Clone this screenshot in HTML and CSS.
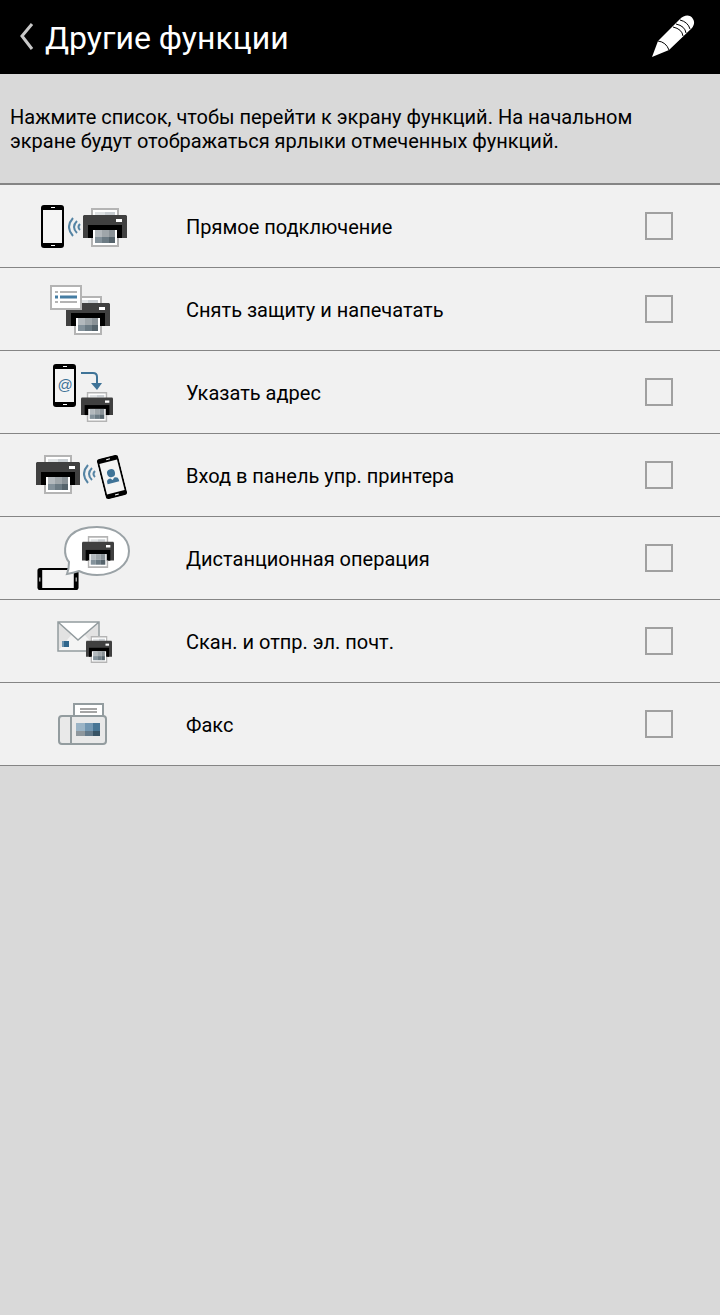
FILE: index.html
```
<!DOCTYPE html>
<html lang="ru">
  <head>
    <meta charset="utf-8">
    <meta name="viewport" content="width=device-width, initial-scale=1">
    <title>Другие функции</title>
    <link rel="stylesheet" href="styles.css">
  </head>
  <body>
    <!-- shared icon parts -->
    <svg class="symbols" width="0" height="0" aria-hidden="true">
      <symbol id="printer" viewBox="0 0 44 39" preserveAspectRatio="none">
        <path d="M9 8V1h26v7" fill="#fff" stroke="#b4b4b4" stroke-width="2"/>
        <path d="M12 4h10v3H12z" fill="#dfe2e4"/>
        <path d="M22 4h10v3H22z" fill="#c9ced2"/>
        <path d="M1 7h42l1 1v22H0V8z" fill="#404040"/>
        <path d="M5 17h34v13H5z" fill="#000"/>
        <path d="M33 11h6v3h-6z" fill="#fff"/>
        <path d="M10 22h24v16H10z" fill="#fff"/>
        <path d="M9 30v8h26v-8" fill="none" stroke="#b4b4b4" stroke-width="2"/>
        <path d="M12 22h7v7h-7z" fill="#b3b9bd"/>
        <path d="M19 22h7v7h-7z" fill="#9fa6aa"/>
        <path d="M26 22h6v7h-6z" fill="#8a9297"/>
        <path d="M12 29h7v6h-7z" fill="#84929b"/>
        <path d="M19 29h7v6h-7z" fill="#6c7b84"/>
        <path d="M26 29h6v6h-6z" fill="#56646c"/>
      </symbol>
      <symbol id="phone" viewBox="0 0 23 43">
        <rect width="23" height="43" rx="3" fill="#000"/>
        <path d="M2 5h19v33H2z" fill="#f4f4f4"/>
        <path d="M10 2h4v1h-4zM10 40h4v1h-4z" fill="#fff"/>
      </symbol>
      <symbol id="waves" viewBox="0 0 13 20">
        <path d="M5 1Q-3 10 5 19M9 4Q3 10 9 16M12 7Q9 10 12 13" fill="none" stroke="#5584a4" stroke-width="2"/>
      </symbol>
    </svg>

    <header class="header">
      <button class="iconButton backButton" type="button" aria-label="Назад">
        <svg width="16" height="28" viewBox="0 0 16 28"><path d="M14 1L4 13l10 13" fill="none" stroke="#c8c8c8" stroke-width="3"/></svg>
      </button>
      <h1 class="title">Другие функции</h1>
      <button class="iconButton" type="button" aria-label="Изменить">
        <svg width="44" height="44" viewBox="0 0 44 44">
          <path d="M1 42L7 26 29 4C33 0 39-1 42 4c2 3 1 6-1 9L18 35z" fill="#fff"/>
          <path d="M7 26q8 1 11 9M22 12q9 2 10 9M25 9q9 2 10 9M29 5q8 2 10 9" fill="none" stroke="#000" stroke-width="1"/>
        </svg>
      </button>
    </header>

    <main>
      <p class="hint">Нажмите список, чтобы перейти к экрану функций. На начальном экране будут отображаться ярлыки отмеченных функций.</p>
      <ul class="functionList">
        <li class="functionItem">
          <svg class="functionIcon" viewBox="0 0 110 82" aria-hidden="true">
            <use href="#phone" x="12" y="20" width="23" height="43"/>
            <use href="#waves" x="39" y="32" width="13" height="20"/>
            <use href="#printer" x="54" y="23" width="44" height="39"/>
          </svg>
          <label class="functionName" for="direct">Прямое подключение</label>
          <input class="check" type="checkbox" id="direct">
        </li>
        <li class="functionItem">
          <svg class="functionIcon" viewBox="0 0 110 82" aria-hidden="true">
            <use href="#printer" x="37" y="28" width="44" height="39"/>
            <path d="M22 18h30v23H22z" fill="#fff" stroke="#b4b4b4" stroke-width="2"/>
            <path d="M26 24h3M31 24h17M26 34h3M31 34h17" stroke="#b4b4b4" stroke-width="2"/>
            <path d="M26 29h3M31 29h17" stroke="#457da3" stroke-width="3"/>
          </svg>
          <label class="functionName" for="release">Снять защиту и напечатать</label>
          <input class="check" type="checkbox" id="release">
        </li>
        <li class="functionItem">
          <svg class="functionIcon" viewBox="0 0 110 82" aria-hidden="true">
            <use href="#phone" x="24" y="13" width="23" height="43"/>
            <text class="atSign" x="36" y="39" text-anchor="middle">@</text>
            <path d="M52 22h12q4 0 4 4v7" fill="none" stroke="#3f7397" stroke-width="2"/>
            <path d="M62 32h11l-5 7z" fill="#3f7397"/>
            <use href="#printer" x="52" y="41" width="32" height="30"/>
          </svg>
          <label class="functionName" for="address">Указать адрес</label>
          <input class="check" type="checkbox" id="address">
        </li>
        <li class="functionItem">
          <svg class="functionIcon" viewBox="0 0 110 82" aria-hidden="true">
            <use href="#printer" x="7" y="21" width="44" height="39"/>
            <use href="#waves" x="54" y="30" width="13" height="20"/>
            <g transform="rotate(-14 83 43)">
              <use href="#phone" x="72" y="22" width="22" height="42"/>
              <circle cx="83" cy="39" r="4" fill="#3f7397"/>
              <path d="M77 49v-2q0-3 4-3l2 2 2-2q4 0 4 3v2z" fill="#3f7397"/>
            </g>
          </svg>
          <label class="functionName" for="login">Вход в панель упр. принтера</label>
          <input class="check" type="checkbox" id="login">
        </li>
        <li class="functionItem">
          <svg class="functionIcon" viewBox="0 0 110 82" aria-hidden="true">
            <use href="#phone" width="22" height="42" transform="translate(50 51) rotate(90)"/>
            <path d="M40 45C34 38 35 25 42 18C48 12 58 10 68 10C86 10 100 20 100 34S86 58 68 58Q58 58 50 54Q44 56 38 57Q40 52 40 45z" fill="#fff" stroke="#9aa2a6" stroke-width="2"/>
            <use href="#printer" x="53" y="19" width="32" height="32"/>
          </svg>
          <label class="functionName" for="remote">Дистанционная операция</label>
          <input class="check" type="checkbox" id="remote">
        </li>
        <li class="functionItem">
          <svg class="functionIcon" viewBox="0 0 110 82" aria-hidden="true">
            <path d="M29 22h41v29H29z" fill="#e2e2e2"/>
            <path d="M29 51l14-17 6 5 6-5 15 17z" fill="#f4f4f4"/>
            <path d="M29 22h41L49 40z" fill="#fff"/>
            <path d="M29 22l20 18 21-18M29 22h41v29H29z" fill="none" stroke="#939c9f" stroke-width="1.5"/>
            <path d="M33 41h5v6h-5z" fill="#6b93af"/>
            <path d="M35 41h5v6h-5z" fill="#2f668c"/>
            <use href="#printer" x="57" y="36" width="26" height="27"/>
          </svg>
          <label class="functionName" for="scan">Скан. и отпр. эл. почт.</label>
          <input class="check" type="checkbox" id="scan">
        </li>
        <li class="functionItem">
          <svg class="functionIcon" viewBox="0 0 110 82" aria-hidden="true">
            <path d="M45 33V21h29v12" fill="#fff" stroke="#939c9f" stroke-width="2"/>
            <path d="M51 26h17M51 29h17" stroke="#888" stroke-width="1.5"/>
            <rect x="30" y="33" width="47" height="28" rx="3" fill="#e9e9e9" stroke="#939c9f" stroke-width="2"/>
            <path d="M42 33v28" stroke="#939c9f" stroke-width="2"/>
            <path d="M47 40h9v8h-9z" fill="#9bb4c6"/>
            <path d="M56 40h8v8h-8z" fill="#7397b2"/>
            <path d="M64 40h7v8h-7z" fill="#487594"/>
            <path d="M47 48h9v5h-9z" fill="#8e979d"/>
            <path d="M56 48h8v5h-8z" fill="#63798a"/>
            <path d="M64 48h7v5h-7z" fill="#385365"/>
          </svg>
          <label class="functionName" for="fax">Факс</label>
          <input class="check" type="checkbox" id="fax">
        </li>
      </ul>
    </main>
  </body>
</html>
```
FILE: styles.css
```
body{
  margin: 0;
  background-color: #d9d9d9;
  color: #000;
  font-family: Roboto, "Liberation Sans", sans-serif;
  font-size: 20px;
}
.symbols{
  position: absolute;
}
.header{
  display: flex;
  align-items: center;
  height: 74px;
  padding: 0 25px 0 18px;
  box-sizing: border-box;
  background-color: #000;
  color: #fff;
}
.iconButton{
  display: flex;
  padding: 0;
  border: 0;
  background: none;
  cursor: pointer;
}
.backButton{
  margin-right: 11px;
}
.title{
  flex: 1;
  margin: 0;
  padding-top: 2px;
  font-size: 32px;
  font-weight: 400;
  line-height: 40px;
}
.hint{
  margin: 0;
  padding: 31px 70px 30px 10px;
  line-height: 24px;
}
.functionList{
  margin: 0;
  padding: 0;
  list-style: none;
  border-top: 2px solid #858585;
}
.functionItem{
  display: flex;
  align-items: center;
  padding: 0 47px 0 29px;
  border-bottom: 1px solid #858585;
  background-color: #f1f1f1;
}
.functionIcon{
  flex: none;
  width: 110px;
  height: 82px;
  margin-right: 47px;
}
.functionName{
  flex: 1;
  padding-top: 2px;
  line-height: 24px;
}
.check{
  appearance: none;
  flex: none;
  width: 28px;
  height: 28px;
  margin: 0;
  border: 2px solid #a0a0a0;
}
.check:checked{
  background-color: #3f7397;
}
.atSign{
  font-family: "Liberation Sans", sans-serif;
  font-size: 15px;
  fill: #3f7397;
}
```
